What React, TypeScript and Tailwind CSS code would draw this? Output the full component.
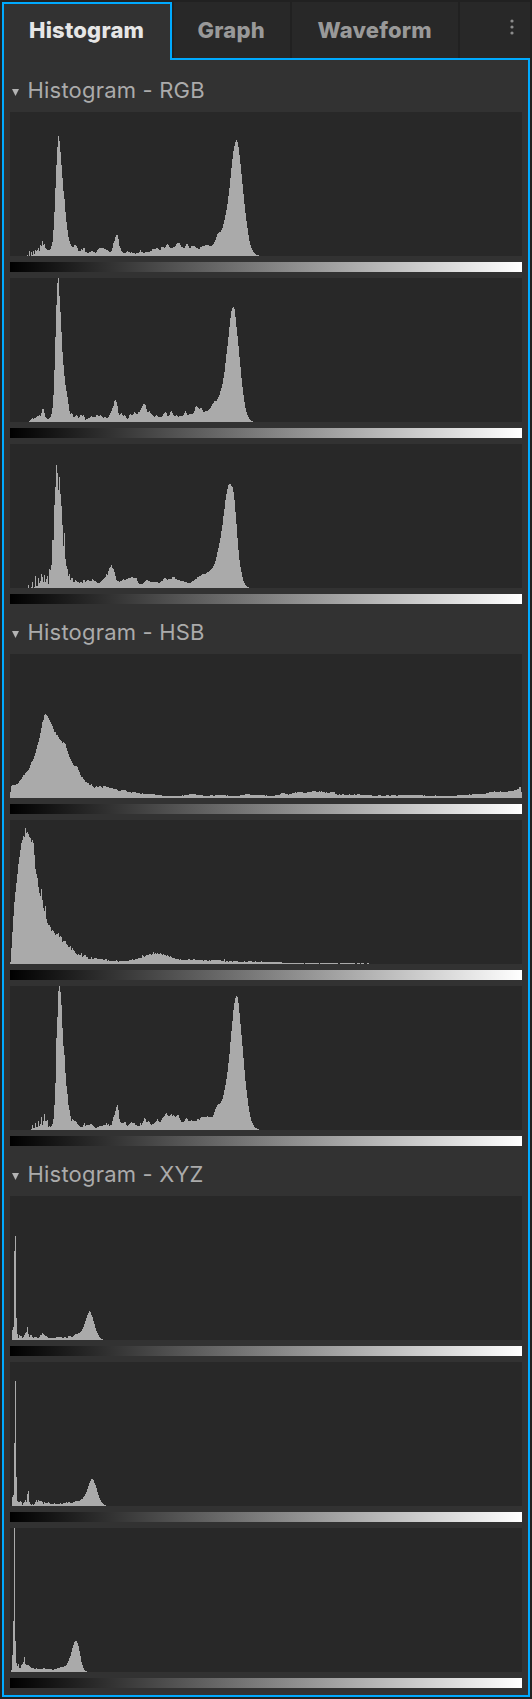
import React from "react";

type Channel = { start: number; runs: string };
type Group = { title: string; channels: Channel[] };

const PLOT_HEIGHT = 144;

// Bin heights in pixels, one per column; "6x3" means three bins of height 6.
const groups: Group[] = [
  {
    title: "Histogram - RGB",
    channels: [
      {
        start: 17,
        runs: "1 0 5 0 4 1 5 2 6 5 6 8 5 11 10 15 11 12 8 7 6x3 7 10 14 26 44 68 91 109 120 115 104 91 78 65 57 44 34 26 19 15 12 10 9x2 11x2 10 8 5x3 7 6 8x2 4x2 3x2 4x2 5x2 4x2 3 4 6 7 8x5 7x2 6x2 5 4x2 5 8 13 15 19 21x2 17 10 8 5 4 3x3 4 5 4x2 3 4 3x3 2 3x3 4 6 4x2 3x2 4x5 5x2 7x4 8x2 7 6x2 9x3 8 9 11 12 11 9 8x3 9x2 10 12 13x3 11 9x2 8x2 10 12x2 10 8x2 10x4 9 8x2 7x2 9x2 10x3 11x4 10x3 11 12 14 16 19 22 23 24x2 26 28 32 36 41 46 52 60 68 78 88 97 105 110 114 116 114 109 101 92 82 72 62 52 43 35 28 21 15 11 8 6 4 3 2 1x3",
      },
      {
        start: 19,
        runs: "1 2 3 4 3 4x2 5 6x2 7 6 9 13x2 9 5 4 3x2 4 5 8 14 27 52 85 117 139 144 126 110 90 70 57 46 37 31 25 18 11 8 9 8 5x2 6 7 6 4 5 7x2 6 7 5 2 3x2 4x2 5 6 5x4 7x2 6x2 7 6 5 4 5x2 4x2 5 7 9 11 14 16 21 22 20 16 9 7 8 9 7 6 7 6 4 3 4 7 8 7x2 8 10 9 8x2 10x2 12 14 16 18x2 17 13 10x2 11 9 8 7 6 5 6 7 6 5x4 6 8 9 10 9 6x2 7 10 11 9 7 6x2 7 6 5 6x4 7 9 11 9 7x2 8x4 9 11 15 16 15 14 13 14x2 12 10x2 11x3 12 13 14 16 18 19 21x3 23 25 27 31 34 38 44 50 59 68 76 85 95 104 111 114 115 113 105 95 86 76 65 55 44 35 27 20 14 10 7 5 3 2 1x2",
      },
      {
        start: 18,
        runs: "3 0x2 1 6 0 1 12 2x2 10 5 7 14 11 6 13 6 9 12 4 19 18 23 48x2 83 101 123 115 98 111 94 82 63 42 55 29 22 19 12 14 8 10x2 6x2 8 7 6x2 5 6x2 5 8x2 6 7 8x2 7x3 9 8 7x2 6 5x3 6 7 8 9 10 11 14 13 17 20 21 23 20 19 16 12 8 7x2 6 7x2 8 9 8x2 9x2 10x3 11x2 10x4 7 5 4x4 5 6 7 8x2 7x2 6x8 5x2 6 7x2 9 10x2 9 8 9x4 11x3 9x2 8x3 7x4 6x3 5x4 6 7x2 8 9x2 11x2 12x2 13 14x4 15 16x2 17 18 19 20 22 24 27 31 36 40 45 50 57 63 72 79 88 94 99 103 104x2 102 101 96 88 76 64 50 38 28 21 16 11 7 5 3 2 1x2",
      },
    ],
  },
  {
    title: "Histogram - HSB",
    channels: [
      {
        start: 0,
        runs: "6 12 13x4 14x2 15 17 18 19 21 23x2 25 26 27 28 30 33 36 37 39 42 45 49 53 56 60 65 70 76 78 83 84 83 82 80 78 76 74 72 69 66x2 63x2 61 59 58 57 55 56 55 54 50 47 44 41 39 37 35 33 32x3 31 28 26 23 21x2 19 18 16x2 15x2 13x2 14 12 11 10 11 12 11x2 12x2 11 10 12x3 11x3 10x4 9x4 8 7x3 8x5 7 6x4 5 6x4 5x4 4x2 5 4x12 3x7 2x20 3 2 3x5 4x7 3x7 2x7 3x3 2x2 3x11 2 3 2x12 3x5 4x5 3x12 3x3 2 3 2x8 3x5 4 5x4 4x3 3 4x3 5x3 6 5 6x6 5x4 6x5 7x4 6x3 7 6 7 6x3 5 6 5x3 6x5 4x2 3x2 4 3x2 4x2 3x5 4 3x4 4 3x2 4x3 3x12 2x6 3x3 2x5 3x3 2x2 3x5 2x2 3x25 2 3 2x10 3 2x21 3x12 4 3x2 4x14 5x3 6x5 7 6x5 7 6x7 7x6 8x3 9x2 11x2 6",
      },
      {
        start: 0,
        runs: "2 16 32 48 62 72 81 90 100 107 114 121 124 128 127 136 131 132 130 127 126 122 124 121 109 95 90 86 77 71 68 75 64 56 53 58 45 41 39x2 37 33 34 33 31 29 30x2 31 27 28 27 22 23x3 20 19 17x2 18 14 16 14 13 11 10 9 10 9x2 11 7 8 9x2 7x2 5x3 7 5x2 6x3 5x6 4x2 5x2 3 4 3x7 4 3 2 3x10 4x3 5 4x2 5x3 6x4 9 8 7 8 9x3 10x2 9 10 12 10 11 10 11 10x2 11 10 9 10 9x2 8 9 8 7 8 7 6x3 5x4 4 5 4x7 5x2 4x3 5x2 4x8 3 4x3 3x2 4 3 4x10 3x3 5 2 3x2 2 3x3 2 3x5 2x6 3 2x3 3x4 2x3 3 2x5 3 2x20 1x22 0 1x14 0 1x18 0x2 1x15 0x2 1x3 0 1x3 0x3 1x2",
      },
      {
        start: 21,
        runs: "1 5 2x2 7 3x2 9 4 6 13 5 9 16 9x2 10 3 4 3 4 6 11 25 47 92 113 139 144 138 125 102 84 75 57 44 36 25 20 14 9 11 10 9x2 8 6 5 4 3x3 5 7 4 5x4 6x2 5 4 3 2x2 3x2 4x4 5x3 7 5 6 4 5x2 9 13 15 19 23 25 20 11 8 7x3 8x2 5 4 5 6 7 8 7x3 5x2 4x3 7 5 7 9 12 11 8x2 9 8 6 5 6x2 7 8 9 11 9 8x2 10 12 13 14 16 17 15 14x2 15 16 14 15 14 13 14 15x2 12 10 8x3 9 11 12 11 9x3 10 9x5 11x2 10 12 13x6 14 13x5 15 18 21 23 25 26x2 27 29 31 35 40 45 51 58 67 76 88 99 109 120 127 132 134 133 127 117 106 95 84 72 60 49 40 32 24 18 13 9 7 5 3 2x2 1x2",
      },
    ],
  },
  {
    title: "Histogram - XYZ",
    channels: [
      {
        start: 2,
        runs: "10 13 89 104 22 6 2 5 4x2 2 3 5 7 8 13 6 3 5x2 3 2 3x3 2x2 3 5x2 7 6 5 4x2 3 2x8 3x6 2x2 3x2 2x2 4x3 3x2 4 5 6x3 7x2 8 9 11 13 16 19 22 25 27 29 28 25 23 19 16 12 9 7 5 3 2 1x2",
      },
      {
        start: 2,
        runs: "9 11 63 125 29 5 4x2 5 4 1 3 4 6 4 12 15 4 2 1 2 1 2 4 6 4 6 5x3 4 2 4 3x3 4 3 2x4 3 2x5 3 2x2 3x3 4 3 4x2 3x3 4x2 5x5 6 7x2 9 10 12 14 17 20 23 25 27x2 26 23 21 18 14 11 8 6 4 3 2 1x2",
      },
      {
        start: 1,
        runs: "2 17 51 144 31 9 6 8 4x2 7 8 10 15 8 7x3 6 5 4x3 3x2 4 3x6 4x2 3x7 2x2 3x3 4x3 5x4 6x2 7 9 11 14 16 20 24 27 30 31x2 29 26 21 16 10 7 4 2 1x2",
      },
    ],
  },
];

function outline({ start, runs }: Channel) {
  let d = `M${start} ${PLOT_HEIGHT}`;
  for (const run of runs.split(" ")) {
    const [height, count = 1] = run.split("x").map(Number);
    d += `V${PLOT_HEIGHT - height}h${count}`;
  }
  return `${d}V${PLOT_HEIGHT}Z`;
}

function Plot({ channel }: { channel: Channel }) {
  return (
    <div className="flex flex-col gap-1.5">
      <svg
        className="block h-36 w-[512px] bg-[#282828]"
        viewBox="0 0 512 144"
        shapeRendering="crispEdges"
      >
        <path d={outline(channel)} fill="#aaaaaa" />
      </svg>
      <div className="h-2.5 bg-[linear-gradient(to_right,#000,#fff)]" />
    </div>
  );
}

function Section({ group }: { group: Group }) {
  return (
    <section>
      <h2 className="flex h-[50px] items-center pt-[6px] text-[22px] tracking-[0.2px] text-[#ababab]">
        <svg className="mt-1 mr-[8.5px] ml-[2px] h-[7px] w-[7px]" viewBox="0 0 7 7">
          <path d="M0 0H7L3.5 7Z" fill="#b4b4b4" />
        </svg>
        <span className="whitespace-nowrap">{group.title}</span>
      </h2>
      <div className="flex flex-col gap-1.5">
        {group.channels.map((channel, i) => (
          <Plot key={i} channel={channel} />
        ))}
      </div>
    </section>
  );
}

export default function App() {
  return (
    <div className="flex h-[1699px] w-[532px] flex-col bg-[#212121] p-[2px] font-['Inter',sans-serif]">
      <header className="flex h-[58px] shrink-0 text-[22px] font-extrabold tracking-[0.2px] text-[#999999]">
        <div className="flex w-[170px] items-center border-x-2 border-t-2 border-[#00aaff] bg-[#323232] pb-1 pl-[25px] text-[#e6e6e6]">
          Histogram
        </div>
        <div className="flex flex-1 gap-[2px] border-b-2 border-[#00aaff] pl-[2px]">
          <div className="flex w-[116px] items-center bg-[#282828] pl-[23.5px]">Graph</div>
          <div className="flex w-[166px] items-center bg-[#282828] pl-[25.5px]">Waveform</div>
          <div className="flex flex-1 bg-[#282828] pt-[17px] pl-[50px]">
            <svg className="h-[17px] w-1" viewBox="0 0 4 17" fill="#8c8c8c">
              <circle cx="2" cy="2" r="1.6" />
              <circle cx="2" cy="8" r="1.6" />
              <circle cx="2" cy="14" r="1.6" />
            </svg>
          </div>
        </div>
      </header>
      <main className="flex-1 border-x-2 border-b-2 border-[#00aaff] bg-[#323232] px-1.5 pt-[2px]">
        {groups.map((group) => (
          <Section key={group.title} group={group} />
        ))}
      </main>
    </div>
  );
}
